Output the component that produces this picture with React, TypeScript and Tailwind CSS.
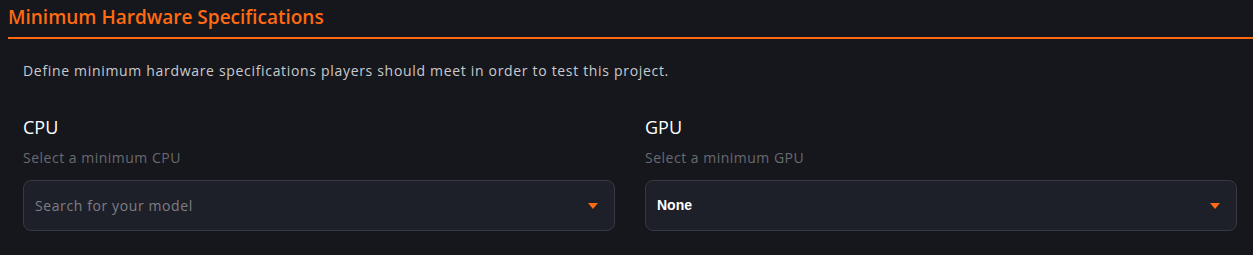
const Caret = () => (
    <svg width="10" height="6" viewBox="0 0 10 6" className="shrink-0">
        <path d="M0 0 H10 L5 6 Z" fill="#ff6a13" />
    </svg>
)

interface SpecSelectProps {
    label: string,
    hint: string,
    value?: string,
    placeholder?: string,
}

const SpecSelect = ({ label, hint, value, placeholder }: SpecSelectProps) => {
    return (
        <div className="flex flex-col">
            <h3 className="text-[18px] leading-[24px] text-white">{label}</h3>
            <p className="mt-[10px] text-[14px] leading-[18px] tracking-[0.5px] text-[#686a70]">{hint}</p>
            <div className="mt-[13px] h-[51px] flex items-center justify-between rounded-lg border border-[#363943] bg-[#1e2029] pl-[11px] pr-[16px]">
                {value
                    ? <span className="text-[14px] font-bold text-white font-['Liberation_Sans',sans-serif]">{value}</span>
                    : <span className="text-[14px] tracking-[0.6px] text-[#7d7e83]">{placeholder}</span>}
                <Caret />
            </div>
        </div>
    )
}

const App = () => {
    return (
        <div className="min-h-screen w-full bg-[#16171c] pl-[8px] font-['Open_Sans',sans-serif]">
            <h2 className="pt-[4px] text-[19px] leading-[26px] font-semibold text-[#ff6a13]">Minimum Hardware Specifications</h2>
            <div className="mt-[7px] h-[2px] bg-[#ff6a13]" />

            <div className="pl-[15px] pr-[16px]">
                <p className="mt-[23px] text-[14px] leading-[18px] tracking-[0.68px] text-[#c9cacd]">
                    Define minimum hardware specifications players should meet in order to test this project.
                </p>

                <div className="mt-[35px] grid grid-cols-2 gap-[30px]">
                    <SpecSelect label="CPU" hint="Select a minimum CPU" placeholder="Search for your model" />
                    <SpecSelect label="GPU" hint="Select a minimum GPU" value="None" />
                </div>
            </div>
        </div>
    )
}

export default App
